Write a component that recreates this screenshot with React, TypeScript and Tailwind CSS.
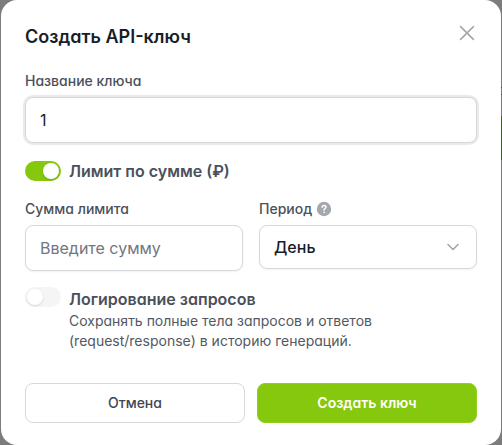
import { useState } from "react";
import type { ReactNode } from "react";

const fieldClass =
  "block w-full rounded-lg border border-[#d5d7da] bg-white px-3.5 text-base text-[#181d27] shadow-xs outline-none placeholder:text-[#717680]";

const labelClass = "text-sm font-medium text-[#4b505b]";

const buttonClass = "h-10 rounded-lg border text-sm";

type ToggleProps = {
  id: string;
  label: string;
  checked: boolean;
  onChange: (value: boolean) => void;
  children?: ReactNode;
};

const Toggle = ({ id, label, checked, onChange, children }: ToggleProps) => (
  <div className={`flex gap-2 ${children ? "items-start" : "items-center"}`}>
    <input
      id={id}
      type="checkbox"
      role="switch"
      checked={checked}
      onChange={(e) => onChange(e.target.checked)}
      className="h-5 w-9 shrink-0 cursor-pointer appearance-none rounded-full bg-[#f5f5f5] p-0.5 before:block before:size-4 before:rounded-full before:bg-white before:shadow-sm checked:bg-[#86c80d] checked:before:translate-x-4"
    />
    <div>
      <label htmlFor={id} className="block text-base font-semibold text-[#4b505b]">
        {label}
      </label>
      {children}
    </div>
  </div>
);

const App = () => {
  const [name, setName] = useState("1");
  const [limited, setLimited] = useState(true);
  const [logging, setLogging] = useState(false);
  const [amount, setAmount] = useState("");
  const [period, setPeriod] = useState("day");

  return (
    <div className="relative min-h-screen bg-[#7c7c7c] px-px font-['Inter',sans-serif] [font-feature-settings:'cv11']">
      {/* page content showing past the edge of the dialog */}
      <div className="absolute top-[87px] right-0 h-2 w-px border-y border-[#444]" />
      <div className="absolute top-[116px] right-0 h-11 w-px bg-[#436406]" />

      <form
        role="dialog"
        aria-labelledby="dialog-title"
        onSubmit={(e) => e.preventDefault()}
        className="relative rounded-2xl bg-white px-6 pt-[23px] pb-[22px]"
      >
        <div className="flex items-start justify-between">
          <h2 id="dialog-title" className="text-lg leading-7 font-semibold text-[#181d27]">
            Создать API-ключ
          </h2>
          <button type="button" aria-label="Закрыть" className="text-[#a4a7ae]">
            <svg viewBox="0 0 20 20" className="size-5" fill="none" stroke="currentColor" strokeWidth="1.6" strokeLinecap="round">
              <path d="M3.6 3.6 16.4 16.4M16.4 3.6 3.6 16.4" />
            </svg>
          </button>
        </div>

        <label htmlFor="key-name" className={`${labelClass} mt-5 block`}>
          Название ключа
        </label>
        <input
          id="key-name"
          value={name}
          onChange={(e) => setName(e.target.value)}
          className={`${fieldClass} mt-1.5 h-[46px] ring-2 ring-[#e9eaeb]`}
        />

        <div className="mt-4">
          <Toggle id="limit" label="Лимит по сумме (₽)" checked={limited} onChange={setLimited} />
        </div>

        <div className="mt-4 grid grid-cols-2 items-start gap-4">
          <div>
            <label htmlFor="amount" className={`${labelClass} block`}>
              Сумма лимита
            </label>
            <input
              id="amount"
              value={amount}
              onChange={(e) => setAmount(e.target.value)}
              placeholder="Введите сумму"
              className={`${fieldClass} mt-1.5 h-[46px]`}
            />
          </div>
          <div>
            <div className="flex items-center gap-1">
              <label htmlFor="period" className={labelClass}>
                Период
              </label>
              <svg viewBox="0 0 16 16" className="size-4" fill="none">
                <circle cx="8" cy="8" r="7.2" fill="#a4a7ae" />
                <path d="M6.1 6.3c.1-1.2.9-1.9 2-1.9s1.9.7 1.9 1.7c0 1.4-1.9 1.4-1.9 2.9" stroke="#fff" strokeWidth="1.5" strokeLinecap="round" />
                <circle cx="8.1" cy="11.3" r=".9" fill="#fff" />
              </svg>
            </div>
            <div className="relative mt-1.5">
              <select
                id="period"
                value={period}
                onChange={(e) => setPeriod(e.target.value)}
                className={`${fieldClass} h-11 appearance-none font-medium`}
              >
                <option value="day">День</option>
                <option value="week">Неделя</option>
                <option value="month">Месяц</option>
              </select>
              <svg
                viewBox="0 0 20 20"
                className="pointer-events-none absolute top-3 right-3.5 size-5 text-[#a4a7ae]"
                fill="none"
                stroke="currentColor"
                strokeWidth="1.6"
                strokeLinecap="round"
                strokeLinejoin="round"
              >
                <path d="m5 7.5 5 5 5-5" />
              </svg>
            </div>
          </div>
        </div>

        <div className="mt-4">
          <Toggle id="logging" label="Логирование запросов" checked={logging} onChange={setLogging}>
            <p className="max-w-80 text-sm text-[#535862]">
              Сохранять полные тела запросов и ответов (request/response) в историю генераций.
            </p>
          </Toggle>
        </div>

        <div className="mt-8 grid grid-cols-2 gap-3">
          <button type="button" className={`${buttonClass} border-[#d5d7da] bg-white font-medium text-[#414651]`}>
            Отмена
          </button>
          <button type="submit" className={`${buttonClass} border-[#92d020] bg-[#86c80d] font-semibold text-white`}>
            Создать ключ
          </button>
        </div>
      </form>
    </div>
  );
};

export default App;
